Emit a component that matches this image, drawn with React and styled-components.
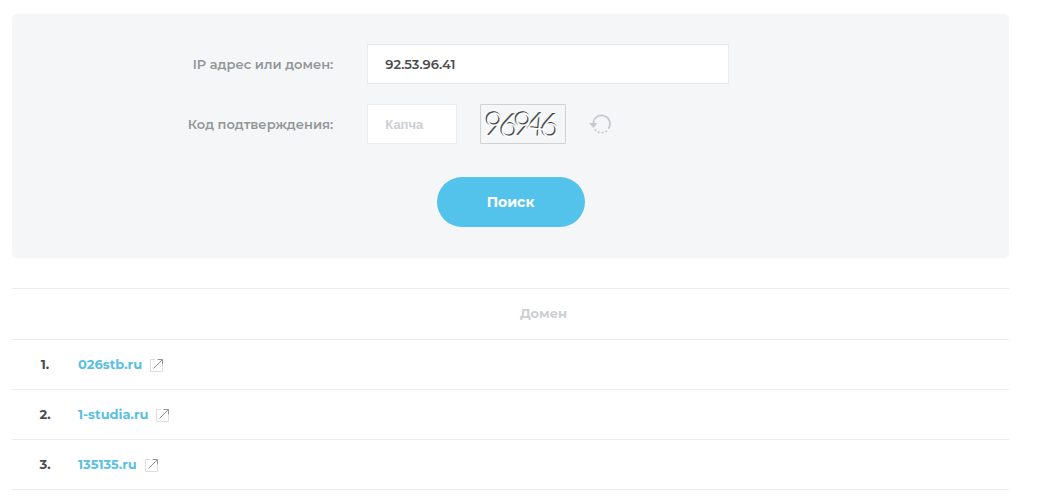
import React, { useState } from "react";
import styled, { createGlobalStyle } from "styled-components";

const GlobalStyle = createGlobalStyle`
  * { box-sizing: border-box; }
  body {
    margin: 0;
    background: #fff;
    color: #4a4d50;
    font: 600 13px/20px Montserrat, Inter, "Noto Sans", sans-serif;
  }
`;

const Page = styled.main`
  padding: 14px 42px 0 12px;
`;

const Panel = styled.form`
  display: flex;
  flex-direction: column;
  gap: 20px;
  padding: 30px 0 31px;
  border-radius: 5px;
  background: #f4f6f8;
`;

const FormRow = styled.div`
  display: grid;
  grid-template-columns: 17fr 362px 13fr;
  column-gap: 34px;
  align-items: center;
`;

const Label = styled.label`
  color: #939697;
  text-align: right;
  white-space: nowrap;
`;

const Input = styled.input`
  width: ${(p) => (p.$short ? "90px" : "100%")};
  height: 40px;
  padding: 0 17px;
  border: 1px solid #eaecee;
  border-radius: 0;
  outline: none;
  background: #fff;
  color: #4a4d50;
  font: inherit;

  &::placeholder {
    color: #cccfd3;
    font: 700 13px "Liberation Sans", Arial, sans-serif;
    opacity: 1;
  }
`;

const CaptchaGroup = styled.div`
  display: flex;
  align-items: center;
`;

const CaptchaFrame = styled.div`
  width: 86px;
  height: 40px;
  margin-left: 23px;
  border: 1px solid #cfd1d4;
  border-radius: 1px;

  svg {
    display: block;
    overflow: visible;
  }
`;

const Digits = styled.text`
  font: 300 32px Lato, sans-serif;
  fill: ${(p) => p.$tone};
  stroke: ${(p) => p.$tone};
  stroke-width: ${(p) => p.$weight || 0};
`;

const RefreshButton = styled.button`
  width: 24px;
  height: 24px;
  margin-left: 23px;
  padding: 0;
  border: 0;
  background: none;
  cursor: pointer;

  svg { display: block; }
`;

const SubmitButton = styled.button`
  align-self: center;
  width: 148px;
  height: 50px;
  margin-top: 13px;
  border: 0;
  border-radius: 25px;
  background: #54c3ec;
  color: #fff;
  font: inherit;
  font-size: 14px;
  font-weight: 700;
  cursor: pointer;
`;

const Results = styled.table`
  width: 100%;
  margin-top: 30px;
  border-top: 1px solid #ececee;
  border-spacing: 0;
  font-weight: 700;
`;

const HeadCell = styled.th`
  width: ${(p) => (p.$narrow ? "66px" : "auto")};
  height: 51px;
  padding: 0 0 2px;
  border-bottom: 1px solid #ececee;
  color: #cccfd3;
`;

const Cell = styled.td`
  height: 50px;
  padding: 0 0 1px;
  border-bottom: 1px solid #ececee;
  text-align: ${(p) => (p.$number ? "center" : "left")};
`;

const DomainLine = styled.div`
  display: flex;
  align-items: center;
  gap: 8px;
`;

const Link = styled.a`
  display: block;
  color: #5bbfe4;
  text-decoration: none;

  svg {
    display: block;
    margin-top: 2px;
  }
`;

const CaptchaPicture = () => (
  <svg width="84" height="38" viewBox="0 0 84 38" role="img" aria-label="96946">
    <g aria-hidden="true">
      <Digits x="2 17 31 44 58" y="29 30 29 29 30" rotate="4 6 4 5 5" $tone="#45494b" $weight="1">96946</Digits>
      <Digits x="3 18 32 45 59" y="30 31 30 30 31" rotate="4 6 4 5 5" $tone="#fff" $weight="0.4">96946</Digits>
    </g>
  </svg>
);

const RefreshIcon = () => (
  <svg width="24" height="24" viewBox="0 0 24 24" fill="none" stroke="#c6c8cc">
    <path d="M4.3 11A8.4 8.4 0 1 1 19.4 16.8" strokeWidth="1.7" />
    <path d="M17.8 18.8A8.4 8.4 0 0 1 4.8 15.8" strokeWidth="1.8" strokeDasharray="1.8 2" />
    <path d="M0 11h8.4l-3.8 5z" fill="#c6c8cc" stroke="none" />
  </svg>
);

const ExternalIcon = () => (
  <svg width="13" height="13" viewBox="0 0 13 13" fill="none">
    <path d="M5 .5H.5v12h12V6" stroke="#dedede" />
    <path d="M3.5 9.5l9-9M7.5.5h5v5" stroke="#959595" />
  </svg>
);

const domains = ["026stb.ru", "1-studia.ru", "135135.ru"];

export default function App() {
  const [address, setAddress] = useState("92.53.96.41");

  return (
    <>
      <GlobalStyle />
      <Page>
        <Panel onSubmit={(e) => e.preventDefault()}>
          <FormRow>
            <Label htmlFor="address">IP адрес или домен:</Label>
            <Input id="address" value={address} onChange={(e) => setAddress(e.target.value)} />
          </FormRow>
          <FormRow>
            <Label htmlFor="captcha">Код подтверждения:</Label>
            <CaptchaGroup>
              <Input id="captcha" placeholder="Капча" $short />
              <CaptchaFrame><CaptchaPicture /></CaptchaFrame>
              <RefreshButton type="button" aria-label="Обновить код"><RefreshIcon /></RefreshButton>
            </CaptchaGroup>
          </FormRow>
          <SubmitButton type="submit">Поиск</SubmitButton>
        </Panel>
        <Results>
          <thead>
            <tr>
              <HeadCell $narrow />
              <HeadCell scope="col">Домен</HeadCell>
            </tr>
          </thead>
          <tbody>
            {domains.map((domain, i) => (
              <tr key={domain}>
                <Cell $number>{i + 1}.</Cell>
                <Cell>
                  <DomainLine>
                    <Link href={`#${domain}`}>{domain}</Link>
                    <Link href={`http://${domain}`} target="_blank" rel="noreferrer" aria-label={`Открыть ${domain}`}>
                      <ExternalIcon />
                    </Link>
                  </DomainLine>
                </Cell>
              </tr>
            ))}
          </tbody>
        </Results>
      </Page>
    </>
  );
}
